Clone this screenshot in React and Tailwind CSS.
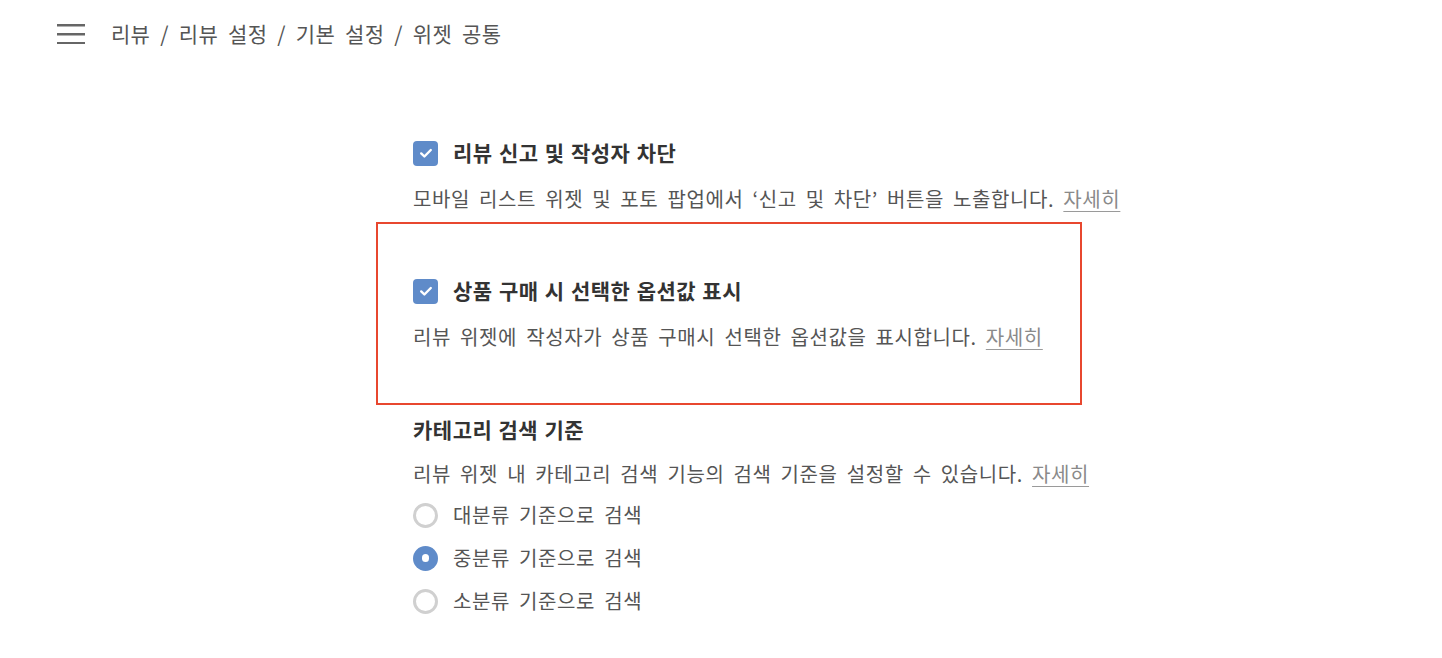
import React from "react";

const font = { fontFamily: '"Noto Sans CJK KR", "Noto Sans", sans-serif' };

const Check = () => (
  <span className="flex items-center justify-center w-[25px] h-[25px] rounded-[4px] bg-[#5f8bc9] shrink-0">
    <svg width="16" height="16" viewBox="0 0 16 16" fill="none">
      <path d="M3.2 8.4l3.2 3.1L12.8 5" stroke="#fff" strokeWidth="2.4" strokeLinecap="round" strokeLinejoin="round" />
    </svg>
  </span>
);

const Radio = ({ on }) =>
  on ? (
    <span className="flex items-center justify-center w-[25px] h-[25px] rounded-full bg-[#5f8bc9] shrink-0">
      <span className="w-[7px] h-[8px] rounded-full bg-white"></span>
    </span>
  ) : (
    <span className="w-[25px] h-[25px] rounded-full border-[3px] border-[#d0d0d0] shrink-0"></span>
  );

const More = () => (
  <a className="text-[#8a8a8a] underline underline-offset-[4px] decoration-1 decoration-[#9a9a9a] cursor-pointer">자세히</a>
);

const App = () => {
  const radios = [
    { label: "대분류 기준으로 검색", on: false },
    { label: "중분류 기준으로 검색", on: true },
    { label: "소분류 기준으로 검색", on: false },
  ];
  const desc = "text-[20px] leading-[28px] tracking-[0.6px] [word-spacing:4px]";
  const title = "text-[21px] font-bold text-[#333] tracking-[0.5px] [word-spacing:1px]";
  return (
    <div className="w-[1442px] h-[658px] bg-white overflow-hidden text-[#555]" style={font}>
      <div className="flex items-center h-[67px] pl-[57px]">
        <svg width="28" height="20" viewBox="0 0 28 20" className="shrink-0">
          <rect x="0" y="0" width="28" height="2.5" fill="#666" />
          <rect x="0" y="9" width="28" height="2.5" fill="#666" />
          <rect x="0" y="18" width="28" height="2.5" fill="#666" />
        </svg>
        <p className="ml-[26px] text-[21px] text-[#555] tracking-[0.3px] [word-spacing:5px]">
          리뷰 / 리뷰 설정 / 기본 설정 / 위젯 공통
        </p>
      </div>

      <div className="ml-[413px] mt-[72px] w-[720px]">
        <div className="flex items-center gap-[15px] h-[28px]">
          <Check />
          <span className={title}>리뷰 신고 및 작성자 차단</span>
        </div>
        <p className={`mt-[18px] ${desc}`}>
          모바일 리스트 위젯 및 포토 팝업에서 ‘신고 및 차단’ 버튼을 노출합니다. <More />
        </p>

        <div className="ml-[-37px] mt-[9px] w-[706px] h-[183px] border-[2px] border-[#e8472f] pl-[35px] pt-[53px]">
          <div className="flex items-center gap-[15px] h-[28px]">
            <Check />
            <span className={title}>상품 구매 시 선택한 옵션값 표시</span>
          </div>
          <p className={`mt-[18px] ${desc}`}>
            리뷰 위젯에 작성자가 상품 구매시 선택한 옵션값을 표시합니다. <More />
          </p>
        </div>

        <p className={`mt-[10px] leading-[28px] ${title}`}>카테고리 검색 기준</p>
        <p className={`mt-[17px] ${desc}`}>
          리뷰 위젯 내 카테고리 검색 기능의 검색 기준을 설정할 수 있습니다. <More />
        </p>
        <div className="mt-[13px] flex flex-col gap-[15px]">
          {radios.map((r, i) => (
            <label key={i} className={`flex items-center gap-[15px] h-[28px] ${desc}`}>
              <Radio on={r.on} />
              <span>{r.label}</span>
            </label>
          ))}
        </div>
      </div>
    </div>
  );
};

export default App;
